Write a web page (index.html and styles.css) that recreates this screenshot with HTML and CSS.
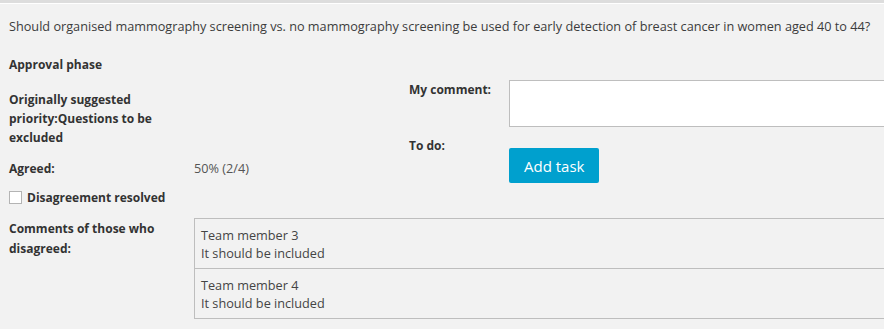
FILE: index.html
```html
<!DOCTYPE html>
<html>

<head>
  <meta charset="UTF-8">
  <title>Approval phase</title>
  <link rel="stylesheet" href="styles.css">
</head>

<body>
  <div class="topbar"></div>
  <div class="panel">
    <p class="question">Should organised mammography screening vs. no mammography screening be used for early detection of breast cancer in women aged 40 to 44?</p>

    <div class="phase">
      <div class="phase__left">
        <p class="phase__title">Approval phase</p>
        <p class="phase__label phase__label--wide">Originally suggested priority:Questions to be excluded</p>
        <div class="phase__row">
          <p class="phase__label">Agreed:</p>
          <p class="phase__value">50% (2/4)</p>
        </div>
        <label class="phase__check">
          <span class="phase__box"></span>
          Disagreement resolved
        </label>
      </div>

      <div class="phase__right">
        <div class="phase__row">
          <p class="phase__label phase__label--right">My comment:</p>
          <textarea class="phase__comment"></textarea>
        </div>
        <div class="phase__row phase__row--todo">
          <p class="phase__label phase__label--right">To do:</p>
          <button class="phase__button">Add task</button>
        </div>
      </div>
    </div>

    <div class="disagreed">
      <p class="phase__label phase__label--tall">Comments of those who disagreed:</p>
      <div class="disagreed__list">
        <div class="disagreed__item">
          <p>Team member 3</p>
          <p>It should be included</p>
        </div>
        <div class="disagreed__item">
          <p>Team member 4</p>
          <p>It should be included</p>
        </div>
      </div>
    </div>
  </div>
</body>

</html>
```

FILE: styles.css
```css
body {
  margin: 0;
  font-family: "Open Sans", sans-serif;
  font-size: 12.7px;
  color: rgb(51, 51, 51);
  background-color: rgb(242, 242, 242);
}

p {
  margin: 0;
}

.topbar {
  height: 3px;
  background-color: rgb(221, 221, 221);
  border-bottom: 1px solid white;
}

.panel {
  height: 325px;
  padding: 0 0 0 9px;
  overflow: hidden;
}

.question {
  width: 1000px;
  margin-top: 13px;
  line-height: 19px;
  color: rgb(60, 60, 60);
}

.phase {
  display: flex;
  margin-top: 19px;
}

.phase__left {
  width: 400px;
  flex-shrink: 0;
}

.phase__title {
  font-size: 12px;
  font-weight: 700;
  line-height: 19px;
}

.phase__label {
  width: 185px;
  font-size: 12px;
  font-weight: 700;
  line-height: 19px;
  flex-shrink: 0;
}

.phase__label--wide {
  width: 150px;
  margin-top: 16px;
}

.phase__label--right {
  width: 100px;
}

.phase__label--tall {
  padding-top: 1px;
  line-height: 20px;
}

.phase__row {
  display: flex;
  margin-top: 12px;
}

.phase__value {
  line-height: 19px;
  color: rgb(85, 85, 85);
}

.phase__check {
  display: flex;
  align-items: center;
  gap: 5px;
  margin-top: 10px;
  font-size: 12px;
  font-weight: 700;
  line-height: 19px;
}

.phase__box {
  width: 11px;
  height: 11px;
  background-color: white;
  border: 1px solid rgb(180, 180, 180);
}

.phase__right {
  padding-top: 25px;
}

.phase__right .phase__row:first-child {
  margin-top: 0;
}

.phase__comment {
  width: 500px;
  height: 45px;
  padding: 0;
  border: 1px solid rgb(190, 190, 190);
  resize: none;
  flex-shrink: 0;
}

.phase__row--todo {
  margin-top: 9px;
}

.phase__button {
  margin-top: 12px;
  padding: 0 15px;
  height: 35px;
  font-family: inherit;
  font-size: 15px;
  color: white;
  background-color: rgb(0, 160, 206);
  border: none;
  border-radius: 2px;
}

.disagreed {
  display: flex;
  margin-top: 11px;
}

.disagreed__list {
  width: 900px;
  flex-shrink: 0;
  border: 1px solid rgb(190, 190, 190);
}

.disagreed__item {
  padding: 7px 6px 6px;
  line-height: 18px;
  color: rgb(68, 68, 68);
}

.disagreed__item + .disagreed__item {
  border-top: 1px solid rgb(190, 190, 190);
}
```
